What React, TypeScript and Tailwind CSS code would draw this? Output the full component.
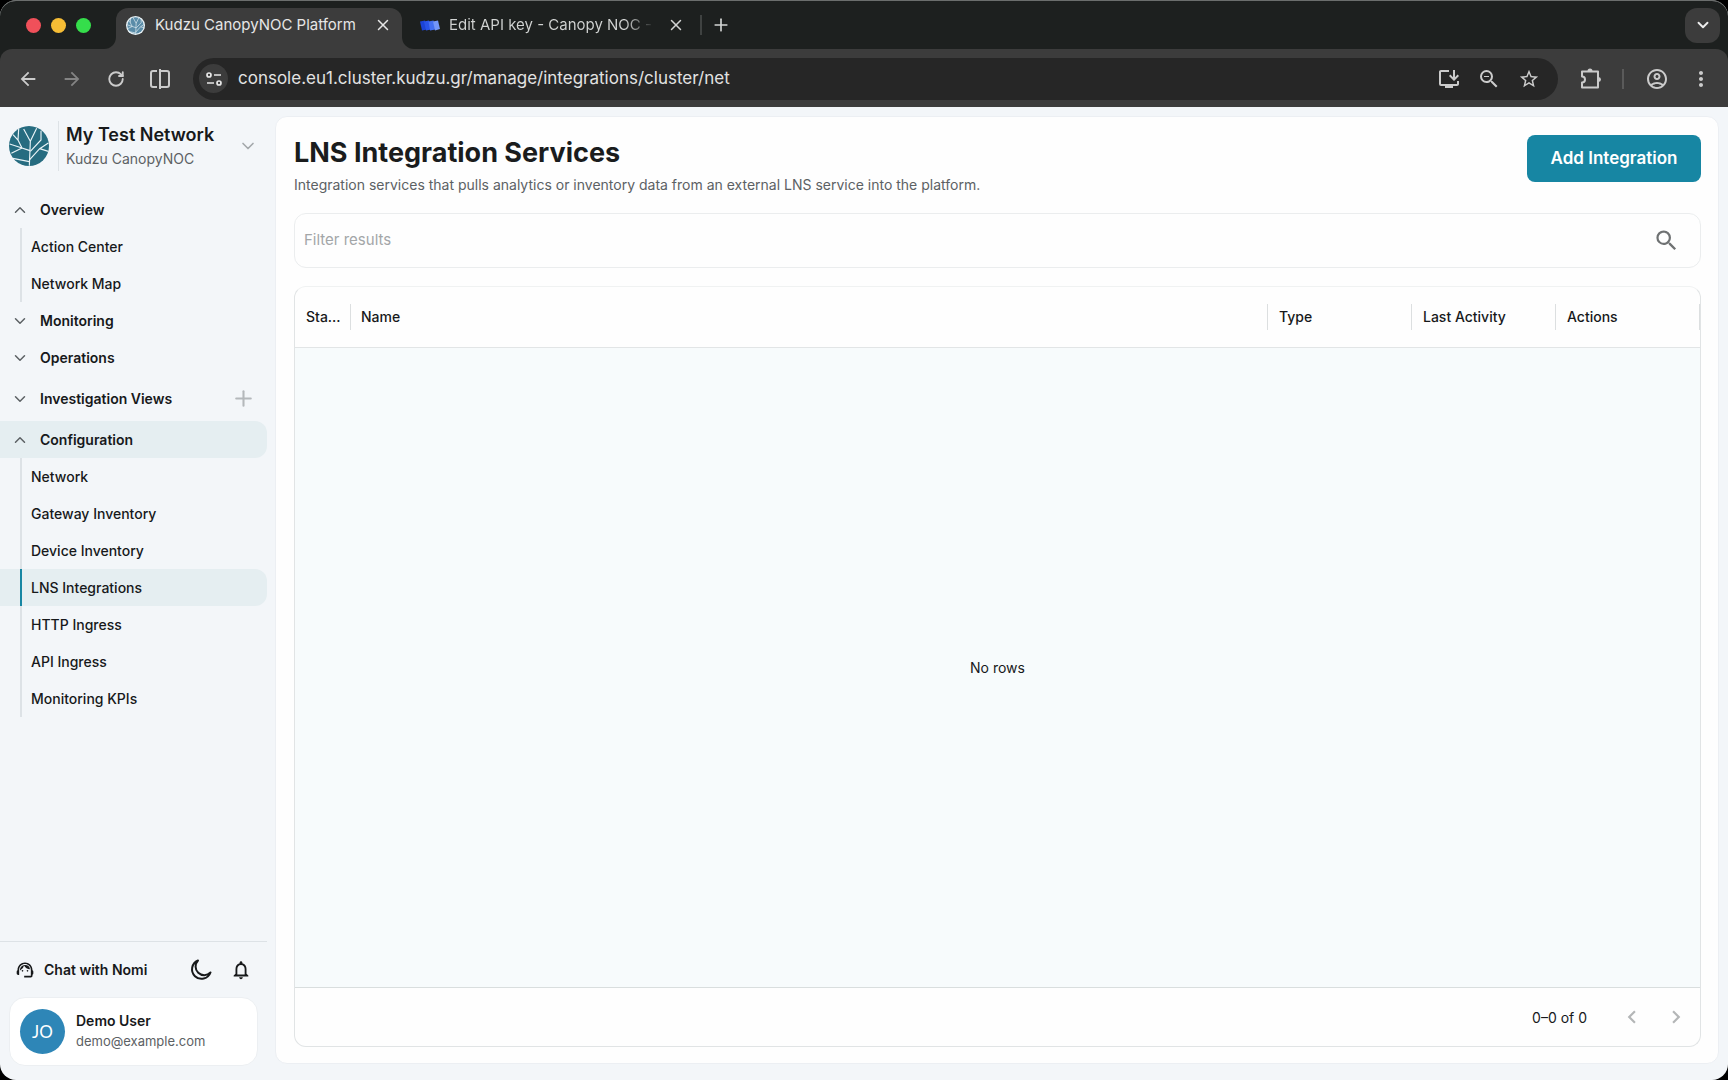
import React, { useState } from 'react';
import {
  MdArrowBack,
  MdArrowForward,
  MdChevronLeft,
  MdChevronRight,
  MdInstallDesktop,
  MdMoreVert,
  MdOutlineAccountCircle,
  MdOutlineNotifications,
  MdSearch,
  MdStarBorder,
  MdSupportAgent,
  MdZoomOut
} from 'react-icons/md';
import { ChevronDown, ChevronUp, Plus, RotateCw, X } from 'lucide-react';

const navGroups = [
  { title: 'Overview', items: ['Action Center', 'Network Map'] },
  { title: 'Monitoring', items: [] },
  { title: 'Operations', items: [] },
  { title: 'Investigation Views', items: [], canAdd: true },
  {
    title: 'Configuration',
    items: [
      'Network',
      'Gateway Inventory',
      'Device Inventory',
      'LNS Integrations',
      'HTTP Ingress',
      'API Ingress',
      'Monitoring KPIs'
    ]
  }
];

const columns = ['Type', 'Last Activity', 'Actions'];

const KudzuLogo = ({ className, ring }: { className: string; ring?: boolean }) => (
  <svg viewBox="0 0 120 120" className={className} aria-hidden="true">
    <circle cx="60" cy="60" r="60" fill={ring ? '#e8f1f5' : '#266c80'} />
    {ring && <circle cx="60" cy="60" r="52" fill="#5a8ca8" />}
    <g fill="none" stroke="#eaf4f7" strokeWidth={ring ? 4 : 3.5}>
      <path d="M61 119L64 46L44 9M64 46L83 7" />
      <path d="M63 74L39 66L27 42L12 26M27 42L29 9" />
      <path d="M39 66L2 54M39 66L7 82M61 107L12 97" />
      <path d="M62 101L92 68L118 51M92 68L118 76M64 76L96 42V14" />
    </g>
  </svg>
);

const TabFoot = ({ side }: { side: 'left' | 'right' }) => (
  <span className="h-3 w-3 self-end bg-[#3c3c3c]">
    <span
      className={`block h-full w-full bg-[#1d201f] ${side === 'left' ? 'rounded-br-xl' : 'rounded-bl-xl'}`}
    />
  </span>
);

const TabStrip = () => (
  <div className="flex h-12 items-center bg-[#1d201f] pl-[26px] pr-2">
    <div className="flex gap-[10px]">
      <span className="h-[15px] w-[15px] rounded-full bg-[#f0505a]" />
      <span className="h-[15px] w-[15px] rounded-full bg-[#f6bd35]" />
      <span className="h-[15px] w-[15px] rounded-full bg-[#35de4b]" />
    </div>
    <div className="ml-[13px] flex h-full items-end">
      <TabFoot side="left" />
      <div className="flex h-[41px] w-[286px] items-center rounded-t-xl bg-[#3c3c3c] pb-[7px] pl-[10px] pr-[10px]">
        <KudzuLogo className="h-[19px] w-[19px]" ring />
        <span className="ml-[10px] flex-1 whitespace-nowrap text-[15px] text-[#e6e6e6]">
          Kudzu CanopyNOC Platform
        </span>
        <button aria-label="Close tab" className="text-[#e6e6e6]">
          <X className="h-[18px] w-[18px]" />
        </button>
      </div>
      <TabFoot side="right" />
    </div>
    <div className="flex w-[286px] items-center pl-[6px]">
      <svg viewBox="0 0 20 11" className="h-[11px] w-5" aria-hidden="true">
        <path d="M0 1.500L5 0.500L7 9.500L2 10.500Z" fill="#1b43d6" />
        <path d="M4 1.500L9 0.500L11 9.500L6 10.500Z" fill="#2853e8" />
        <path d="M8.500 1.500L13.500 0.500L15.500 9.500L10 10.500Z" fill="#436ff1" />
        <path d="M13 1.500L18 0.500L20 9L15 10.500Z" fill="#7396f8" />
      </svg>
      <span className="ml-[9px] w-[206px] overflow-hidden whitespace-nowrap bg-gradient-to-r from-[#d2d4d3] from-85% to-transparent to-100% bg-clip-text text-[15px] text-transparent">
        Edit API key - Canopy NOC -
      </span>
      <button aria-label="Close tab" className="ml-3 text-[#d2d4d3]">
        <X className="h-[18px] w-[18px]" />
      </button>
    </div>
    <span className="h-5 w-[2px] bg-[#3f4241]" />
    <button aria-label="New tab" className="ml-[9px] text-[#d2d4d3]">
      <Plus className="h-5 w-5" />
    </button>
    <button
      aria-label="Search tabs"
      className="ml-auto flex h-[35px] w-[35px] items-center justify-center rounded-xl bg-[#3c3c3c] text-[#ececec]"
    >
      <ChevronDown className="h-[18px] w-[18px]" strokeWidth={2.5} />
    </button>
  </div>
);

const toolButton = 'flex h-10 w-10 shrink-0 items-center justify-center text-[#cbcbcb]';
const navButton = 'flex h-10 w-11 shrink-0 items-center justify-center text-[#cbcbcb]';

const Toolbar = () => (
  <div className="bg-[#1d201f]">
    <div className="flex h-[58px] items-center rounded-t-xl bg-[#3c3c3c] pl-[6px] pr-[7px] pt-px">
      <button aria-label="Back" className={navButton}>
        <MdArrowBack className="h-[22px] w-[22px]" />
      </button>
      <button aria-label="Forward" className={`${navButton} opacity-50`}>
        <MdArrowForward className="h-[22px] w-[22px]" />
      </button>
      <button aria-label="Reload" className={navButton}>
        <RotateCw className="h-[18px] w-[18px]" strokeWidth={2.5} />
      </button>
      <button aria-label="Split view" className={navButton}>
        <svg viewBox="0 0 20 22" className="h-[22px] w-5" fill="none" stroke="currentColor" strokeWidth="2">
          <path d="M7 3H3Q1 3 1 5V17Q1 19 3 19H7M10 1V21M10 3H17Q19 3 19 5V17Q19 19 17 19H10" />
        </svg>
      </button>
      <div className="ml-[11px] flex h-[42px] flex-1 items-center rounded-full bg-[#262626] pl-[6px] pr-[9px]">
        <button
          aria-label="Site information"
          className="flex h-[29px] w-[29px] items-center justify-center rounded-full bg-[#3c3c3c] text-[#e6e6e6]"
        >
          <svg viewBox="0 0 16 14" className="h-[14px] w-4" fill="none" stroke="currentColor" strokeWidth="1.700">
            <circle cx="3" cy="3" r="2" />
            <circle cx="13" cy="11" r="2" />
            <path d="M8 3H15M1 11H8" />
          </svg>
        </button>
        <input
          aria-label="Address"
          defaultValue="console.eu1.cluster.kudzu.gr/manage/integrations/cluster/net"
          className="ml-[10px] min-w-0 flex-1 bg-transparent text-[17px] text-[#e2e2e2] outline-none"
        />
        <button aria-label="Install app" className={toolButton}>
          <MdInstallDesktop className="h-6 w-6" />
        </button>
        <button aria-label="Zoom" className={toolButton}>
          <MdZoomOut className="h-6 w-6" />
        </button>
        <button aria-label="Bookmark" className={toolButton}>
          <MdStarBorder className="h-[22px] w-[22px]" />
        </button>
      </div>
      <button aria-label="Extensions" className={`${toolButton} ml-[13px]`}>
        <svg viewBox="0 0 22 22" className="h-[22px] w-[22px]" fill="none" stroke="currentColor" strokeWidth="2">
          <path d="M2 3.500H18V19.500H2V14.500A3 3 0 0 0 2 8.500Z" strokeLinejoin="round" />
          <path d="M7.500 3A2.500 2.500 0 0 1 12.500 3ZM18.500 9A2.500 2.500 0 0 1 18.500 14Z" fill="currentColor" stroke="none" />
        </svg>
      </button>
      <span className="ml-[11px] h-5 w-[2px] bg-[#5a5a5a]" />
      <button aria-label="Profile" className={`${toolButton} ml-[13px]`}>
        <MdOutlineAccountCircle className="h-6 w-6" />
      </button>
      <button aria-label="Menu" className={`${toolButton} ml-1`}>
        <MdMoreVert className="h-6 w-6" />
      </button>
    </div>
  </div>
);

const Sidebar = () => {
  const [open, setOpen] = useState(['Overview', 'Configuration']);

  const toggle = (title: string) => {
    setOpen((prev) => (prev.includes(title) ? prev.filter((t) => t !== title) : [...prev, title]));
  };

  return (
    <aside className="flex w-[275px] shrink-0 flex-col pr-2">
      <button className="mt-[14px] flex items-center pl-[9px] pr-[9px] text-left">
        <KudzuLogo className="h-10 w-10" />
        <span className="ml-[9px] h-[50px] border-l border-[#dde2e6]" />
        <span className="ml-[7px] flex-1 pt-px">
          <span className="block text-[18px] font-semibold leading-6 text-[#17191b]">My Test Network</span>
          <span className="block text-[14px] leading-6 text-[#5c6164]">Kudzu CanopyNOC</span>
        </span>
        <ChevronDown className="h-5 w-5 text-[#a4a8ab]" />
      </button>

      <nav className="mt-5 flex-1 text-[14px] text-[#17191b]">
        {navGroups.map((group) => {
          const expanded = open.includes(group.title);
          const selected = group.items.includes('LNS Integrations');
          return (
            <div key={group.title}>
              <div
                className={`flex items-center rounded-r-xl pl-[11px] pr-[11px] ${group.canAdd ? 'h-[45px]' : 'h-[37px]'} ${
                  selected ? 'bg-[#e5eef1]' : ''
                }`}
              >
                <button
                  onClick={() => toggle(group.title)}
                  aria-expanded={expanded}
                  className="flex flex-1 items-center text-left font-semibold"
                >
                  {expanded ? (
                    <ChevronUp className="h-[18px] w-[18px] text-[#5c6164]" />
                  ) : (
                    <ChevronDown className="h-[18px] w-[18px] text-[#5c6164]" />
                  )}
                  <span className="ml-[11px]">{group.title}</span>
                </button>
                {group.canAdd && (
                  <button aria-label="Add view" className="text-[#b4b8bb]">
                    <Plus className="h-[25px] w-[25px]" />
                  </button>
                )}
              </div>
              {expanded &&
                group.items.map((item) => (
                  <a
                    key={item}
                    href="#"
                    className={`flex h-[37px] rounded-r-xl pl-5 font-medium ${
                      item === 'LNS Integrations' ? 'bg-[#e5eef1]' : ''
                    }`}
                  >
                    <span
                      className={`flex items-center border-l-2 pl-[9px] ${
                        item === 'LNS Integrations' ? 'border-[#1786a3]' : 'border-[#dde2e6]'
                      }`}
                    >
                      {item}
                    </span>
                  </a>
                ))}
            </div>
          );
        })}
      </nav>

      <div className="border-t border-[#dde2e6] pb-[14px]">
        <div className="flex h-[55px] items-center pl-[15px] pr-[6px] text-[#17191b]">
          <button className="flex flex-1 items-center gap-[9px] text-[14px] font-semibold">
            <MdSupportAgent className="h-5 w-5" />
            Chat with Nomi
          </button>
          <button aria-label="Dark mode" className="flex h-10 w-10 items-center justify-center">
            <svg viewBox="0 0 24 24" className="h-6 w-6" fill="none" stroke="currentColor" strokeWidth="2">
              <path d="M9 2.500A9.500 9.500 0 1 0 21.500 14.500A8 8 0 0 1 9 2.500Z" strokeLinejoin="round" />
            </svg>
          </button>
          <button aria-label="Notifications" className="flex h-10 w-10 items-center justify-center">
            <MdOutlineNotifications className="h-[22px] w-[22px]" />
          </button>
        </div>
        <div className="ml-[9px] mr-[9px] flex h-[69px] items-center rounded-2xl border border-[#eceff2] bg-white pl-[10px]">
          <span className="flex h-[45px] w-[45px] items-center justify-center rounded-full bg-[#2e86b7] font-[Lato,sans-serif] text-[17px] text-white">
            JO
          </span>
          <span className="ml-[11px] pb-[2px]">
            <span className="block text-[14px] font-semibold leading-5 text-[#17191b]">Demo User</span>
            <span className="block text-[13px] leading-5 text-[#5c6164]">demo@example.com</span>
          </span>
        </div>
      </div>
    </aside>
  );
};

const IntegrationsTable = () => (
  <section className="mt-[18px] flex min-h-0 flex-1 flex-col overflow-hidden rounded-xl border border-[#e1e4e5] border-t-[#f0f2f2]">
    <div className="min-h-0 flex-1">
      <table className="h-full w-full table-fixed border-collapse text-[14px] text-[#17191b]">
        <thead>
          <tr className="h-[60px] border-b border-[#e2e5e6] text-left">
            <th className="w-14 p-0 font-medium">
              <div className="flex h-[26px] items-center border-r border-[#dcdfe0] pl-[11px] pr-2">
                <span className="truncate">Status</span>
              </div>
            </th>
            <th className="p-0 font-medium">
              <div className="flex h-[26px] items-center border-r border-[#dcdfe0] pl-[10px]">Name</div>
            </th>
            {columns.map((column) => (
              <th key={column} className="w-36 p-0 font-medium">
                <div className="flex h-[26px] items-center border-r border-[#dcdfe0] pl-[11px]">{column}</div>
              </th>
            ))}
          </tr>
        </thead>
        <tbody>
          <tr>
            <td colSpan={5} className="bg-[#f7fbfc] text-center">
              No rows
            </td>
          </tr>
        </tbody>
      </table>
    </div>
    <div className="flex h-[59px] items-center justify-end border-t border-[#d9dede] pr-[2px] text-[14px] text-[#17191b]">
      <span className="mr-[23px]">0–0 of 0</span>
      <button aria-label="Previous page" disabled className="flex h-10 w-11 items-center justify-center text-[#b4b6b7]">
        <MdChevronLeft className="h-[26px] w-[26px]" />
      </button>
      <button aria-label="Next page" disabled className="flex h-10 w-11 items-center justify-center text-[#b4b6b7]">
        <MdChevronRight className="h-[26px] w-[26px]" />
      </button>
    </div>
  </section>
);

const App = () => {
  const [filter, setFilter] = useState('');

  return (
    <div className="bg-black">
      <div className="flex h-screen flex-col overflow-hidden rounded-2xl border-t border-[#6b6e6d] bg-[#f3f6f9] font-[Inter,sans-serif]">
        <TabStrip />
        <Toolbar />
        <div className="flex min-h-0 flex-1">
          <Sidebar />
          <main className="mb-4 mr-[9px] mt-[9px] flex min-w-0 flex-1 flex-col rounded-xl border border-[#eceff3] bg-[#fefefe] pb-4 pl-[18px] pr-[17px] pt-[17px]">
            <header className="flex items-center justify-between">
              <div>
                <h1 className="text-[27px] font-bold leading-[38px] text-[#1a1c1d]">LNS Integration Services</h1>
                <p className="mt-px text-[14px] leading-6 text-[#5c6164]">
                  Integration services that pulls analytics or inventory data from an external LNS service into the
                  platform.
                </p>
              </div>
              <button className="mb-[14px] h-[47px] w-[174px] rounded-lg bg-[#1786a3] text-[17px] font-semibold text-white">
                Add Integration
              </button>
            </header>

            <div className="mt-4 flex h-[55px] items-center rounded-xl border border-[#ebedee] pl-[9px] pr-5">
              <input
                aria-label="Filter results"
                placeholder="Filter results"
                value={filter}
                onChange={(e) => setFilter(e.target.value)}
                className="min-w-0 flex-1 bg-transparent text-[15px] outline-none placeholder:text-[#a3a6a8]"
              />
              <button aria-label="Search" className="text-[#6f7273]">
                <MdSearch className="h-[27px] w-[27px]" />
              </button>
            </div>

            <IntegrationsTable />
          </main>
        </div>
      </div>
    </div>
  );
};

export default App;
